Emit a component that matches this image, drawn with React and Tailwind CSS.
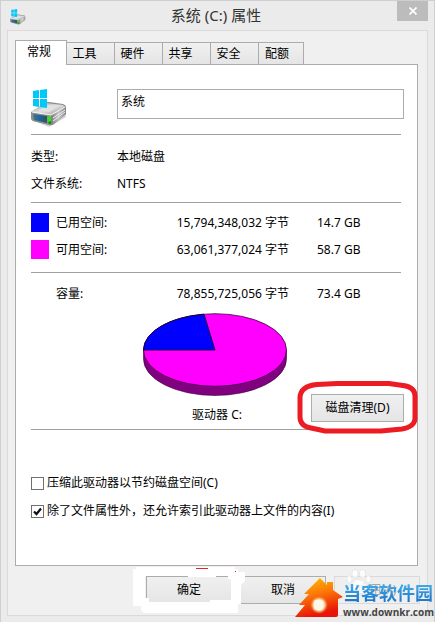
import { useState } from 'react'

const TABS = ['常规', '工具', '硬件', '共享', '安全', '配额']

const USAGE = [
	{ label: '已用空间:', bytes: '15,794,348,032 字节', size: '14.7 GB', color: 'bg-[#0000ff]' },
	{ label: '可用空间:', bytes: '63,061,377,024 字节', size: '58.7 GB', color: 'bg-[#ff00ff]' },
]

function DriveIcon({ className }) {
	return (
		<svg className={className} viewBox="0 0 36 38" aria-hidden="true">
			<defs>
				<linearGradient id="driveTop" x1="0" y1="0" x2="1" y2="1">
					<stop offset="0" stopColor="#a9a9a9" />
					<stop offset="0.5" stopColor="#dedede" />
					<stop offset="1" stopColor="#999999" />
				</linearGradient>
				<linearGradient id="driveSide" x1="0" y1="0" x2="1" y2="0">
					<stop offset="0" stopColor="#777777" />
					<stop offset="0.5" stopColor="#c4c4c4" />
					<stop offset="1" stopColor="#858585" />
				</linearGradient>
				<linearGradient id="driveFront" x1="0" y1="0" x2="1" y2="0">
					<stop offset="0" stopColor="#477286" />
					<stop offset="0.5" stopColor="#1d659c" />
					<stop offset="1" stopColor="#35505a" />
				</linearGradient>
			</defs>
			<path d="M3 32L18 38L35 28L34 24Z" fill="#d4d4d4" />
			<path d="M0 23L14 14Q16 13 18 13L32 15Q35 16 35 18V25L23 35Q21 37 18 36L2 32Q0 31 0 29Z" fill="#8a8a8a" />
			<path d="M1 22L15 14L32 16L34 18L20 26L2 24Z" fill="url(#driveTop)" />
			<path d="M7 22L17 16L28 17L18 23Z" fill="#e2e2e2" />
			<path d="M20 26L35 18V25L21 36Z" fill="url(#driveSide)" />
			<path d="M22 29L34 21M22 32L34 23" stroke="#eeeeee" strokeWidth="1" />
			<path d="M0 23L20 26V36L2 32L0 29Z" fill="#8b8f8f" />
			<path d="M2 25L16 27V34L3 31Z" fill="url(#driveFront)" />
			<path d="M16 28L20 27V33L17 34Z" fill="#35e022" />
			<path d="M17 33L20 32V35L18 35Z" fill="#148b16" />
			<path d="M1 23L20 26L34 18" fill="none" stroke="#f7f7f7" strokeWidth="1" />
			<path d="M2 2L8 1V9H2ZM9 1L16 0V9H9ZM2 10H8V18L2 17ZM9 10H16V19L9 18Z" fill="#00c8f8" />
		</svg>
	)
}

function UsagePie() {
	return (
		<svg className="h-[84px] w-36" viewBox="0 0 144 84" role="img" aria-label="驱动器 C:">
			<path d="M0.5 37V46A71.5 36.5 0 0 0 143.5 46V37Z" fill="#800080" stroke="#3c003c" strokeWidth="0.6" />
			<ellipse cx="72" cy="37" rx="71.5" ry="36.3" fill="#ff00ff" stroke="#3c003c" strokeWidth="0.8" />
			<path d="M72 37H0.5A71.5 36.3 0 0 1 61 1.2Z" fill="#0000ff" stroke="#20003c" strokeWidth="1" />
		</svg>
	)
}

function Check({ label, checked, onChange }) {
	return (
		<label className="flex h-7 items-center">
			<span className="relative mr-[3px] block size-[13px]">
				<input
					type="checkbox"
					checked={checked}
					onChange={onChange}
					className="peer block size-[13px] appearance-none border border-[#707070] bg-white"
				/>
				<svg className="pointer-events-none absolute inset-0 hidden size-[13px] peer-checked:block" viewBox="0 0 13 13">
					<path d="M3 6.5L5.5 9L10 3.5" fill="none" stroke="#111" strokeWidth="2.2" />
				</svg>
			</span>
			<span>{label}</span>
		</label>
	)
}

function Button({ children, className, ...props }) {
	return (
		<button
			className={`h-7 border border-[#acacac] bg-linear-to-b from-[#f0f0f0] to-[#e5e5e5] disabled:border-[#d9d9d9] disabled:from-[#efefef] disabled:to-[#efefef] disabled:text-[#a8a4a2] ${className}`}
			{...props}
		>
			{children}
		</button>
	)
}

function Brush() {
	return (
		<svg className="pointer-events-none absolute -left-[13px] -top-[9px] h-[47px] w-[114px]" viewBox="0 0 114 47" aria-hidden="true">
			<path
				fillRule="evenodd"
				fill="#ffffff"
				d="M0 2H3V0H102V2H105V5H112V14L108 18V37H105V46H11L8 43V39H0ZM12 9V31H16V35H77V33H98V12H95V9H83V10H55V9Z"
			/>
			<path d="M63 1H75V2H63ZM102 4H103V5H102Z" fill="#e8212c" />
		</svg>
	)
}

function Paw() {
	return (
		<svg className="absolute right-[61px] bottom-6 h-[30px] w-[27px] opacity-80" viewBox="0 0 36 38" fill="#ffffff" stroke="#dcdcdc" aria-hidden="true">
			<ellipse cx="4.5" cy="14" rx="3.5" ry="5" />
			<ellipse cx="12" cy="6.5" rx="4" ry="5.5" />
			<ellipse cx="22" cy="6.5" rx="4" ry="5.5" />
			<ellipse cx="30" cy="14" rx="3.5" ry="5" />
			<path d="M16 14C10 14 9 20 5 24C0 29 3 36 10 35C15 33 19 33 25 35C32 36 35 29 30 24C25 20 23 14 16 14Z" />
		</svg>
	)
}

function SiteMark() {
	return (
		<a href="#site" className="absolute right-0 bottom-0 flex items-end">
			<svg className="mb-[5px] h-10 w-12" viewBox="0 0 48 40" aria-hidden="true">
				<defs>
					<linearGradient id="house" x1="0" y1="0" x2="0.3" y2="1">
						<stop offset="0" stopColor="#ffc400" />
						<stop offset="0.5" stopColor="#fb7608" />
						<stop offset="1" stopColor="#e81408" />
					</linearGradient>
					<radialGradient id="glow">
						<stop offset="0" stopColor="#ffffff" />
						<stop offset="0.6" stopColor="#ffe9b8" />
						<stop offset="1" stopColor="#ff9840" stopOpacity="0" />
					</radialGradient>
				</defs>
				<path d="M25 1L32 8V5H38V13L48 20L43 22V38Q43 40 41 40H0L10 28H4L14 17H9Z" fill="url(#house)" />
				<circle cx="24" cy="28" r="9" fill="url(#glow)" />
				<rect x="19" y="23" width="9" height="10" rx="2" fill="#fff8e8" />
			</svg>
			<div className="pb-0.5">
				<div className="bg-linear-to-b from-[#46b2ee] to-[#176fc4] bg-clip-text text-lg leading-[22px] font-bold whitespace-nowrap text-transparent">当客软件园</div>
				<div className="font-['Open_Sans',sans-serif] text-[10px] leading-4 font-bold text-[#444]">www.downkr.com</div>
			</div>
		</a>
	)
}

export default function App() {
	const [tab, setTab] = useState('常规')
	const [name, setName] = useState('系统')
	const [compress, setCompress] = useState(false)
	const [index, setIndex] = useState(true)

	return (
		<div className="relative flex min-h-screen flex-col overflow-hidden border border-[#cfcfcf] bg-[#ebebeb] px-1.5 pb-1.5 font-['Noto_Sans','Noto_Sans_CJK_SC',sans-serif] text-xs text-black">
			<header className="flex h-[29px] items-start">
				<DriveIcon className="mt-2 ml-0.5 h-4 w-[18px]" />
				<h1 className="flex-1 pl-2 text-center text-[15px] leading-7 text-[#333]">系统 (C:) 属性</h1>
				<button aria-label="关闭" className="flex h-5 w-[31px] items-center justify-center bg-[#bcbcbc]">
					<svg className="size-2" viewBox="0 0 8 8" aria-hidden="true">
						<path d="M0.5 0.5L7.5 7.5M7.5 0.5L0.5 7.5" stroke="#fff" strokeWidth="1.7" />
					</svg>
				</button>
			</header>

			<main className="flex flex-1 flex-col border border-[#dadada] bg-[#f0f0f0] px-[7px] pt-[9px]">
				<div role="tablist" className="relative flex items-end">
					{TABS.map((t) => (
						<button
							key={t}
							role="tab"
							aria-selected={t === tab}
							onClick={() => setTab(t)}
							className={t === tab
								? '-mb-px h-[25px] w-[52px] border border-b-0 border-[#acacac] bg-white pr-1 pb-0.5'
								: '-ml-px h-[22px] w-[49px] border border-b-0 border-[#acacac] bg-linear-to-b from-[#f0f0f0] to-[#e5e5e5] pr-3 first:ml-0 last:w-[46px] last:pr-2'}
						>
							{t}
						</button>
					))}
				</div>

				<section className="mr-0.5 border border-[#acacac] bg-white pr-4 pb-10 pl-[15px]">
					<div className="flex h-[69px] pt-6">
						<DriveIcon className="h-[38px] w-9" />
						<input
							aria-label="卷标"
							value={name}
							onChange={(e) => setName(e.target.value)}
							className="-mr-[3px] ml-[50px] h-[30px] min-w-0 flex-1 border border-[#acacac] px-[3px] pb-1.5 outline-none"
						/>
					</div>

					<dl className="grid grid-cols-[86px_1fr] border-t border-[#a0a0a0] pt-2 pb-[5px] leading-[27px]">
						<dt>类型:</dt>
						<dd>本地磁盘</dd>
						<dt>文件系统:</dt>
						<dd>NTFS</dd>
					</dl>

					<div className="border-t border-[#a0a0a0] pt-1.5">
						<table className="w-full table-fixed">
							<colgroup>
								<col className="w-[25px]" />
								<col className="w-[91px]" />
								<col className="w-[142px]" />
								<col />
							</colgroup>
							<tbody>
								{USAGE.map((row) => (
									<tr key={row.label} className="h-[27px]">
										<td className="p-0"><div className={`h-[19px] w-[18px] ${row.color}`} /></td>
										<th className="p-0 text-left font-normal">{row.label}</th>
										<td className="p-0 text-right">{row.bytes}</td>
										<td className="p-0 pl-7">{row.size}</td>
									</tr>
								))}
								<tr className="h-[9px]"><td colSpan={4} className="p-0" /></tr>
							</tbody>
							<tfoot>
								<tr className="h-[35px] border-t border-[#a0a0a0]">
									<td className="p-0" />
									<th className="p-0 pt-[9px] text-left font-normal">容量:</th>
									<td className="p-0 pt-[9px] text-right">78,855,725,056 字节</td>
									<td className="p-0 pt-[9px] pl-7">73.4 GB</td>
								</tr>
							</tfoot>
						</table>
					</div>

					<div className="flex items-end border-b border-[#a0a0a0] pt-1.5 pl-28">
						<div className="flex flex-col items-center gap-1 pb-px">
							<UsagePie />
							<span className="pl-1 leading-[27px]">驱动器 C:</span>
						</div>
						<div className="relative -mr-[3px] mb-[7px] ml-auto">
							<Button className="w-[93px]">磁盘清理(D)</Button>
							<svg className="pointer-events-none absolute -top-[13px] -left-[14px] h-[53px] w-[121px]" viewBox="0 0 121 53" aria-hidden="true">
								<path d="M20 3.5L40 2.5H92L106 4.5Q118 6 118 15V38Q117 46 105 48L84 50H28L14 47Q3 45 3 36V16Q4 5 20 3.5Z" fill="none" stroke="#ed1c24" strokeWidth="5" />
							</svg>
						</div>
					</div>

					<div className="pt-[39px]">
						<Check label="压缩此驱动器以节约磁盘空间(C)" checked={compress} onChange={(e) => setCompress(e.target.checked)} />
						<Check label="除了文件属性外，还允许索引此驱动器上文件的内容(I)" checked={index} onChange={(e) => setIndex(e.target.checked)} />
					</div>
				</section>

				<footer className="flex justify-end gap-2 pt-2.5 pb-[11px]">
					<div className="relative z-10">
						<Button className="w-[86px]">确定</Button>
						<Brush />
					</div>
					<Button className="w-[86px]">取消</Button>
					<Button className="w-[86px]" disabled>应用(A)</Button>
				</footer>
			</main>

			<Paw />
			<SiteMark />
		</div>
	)
}
